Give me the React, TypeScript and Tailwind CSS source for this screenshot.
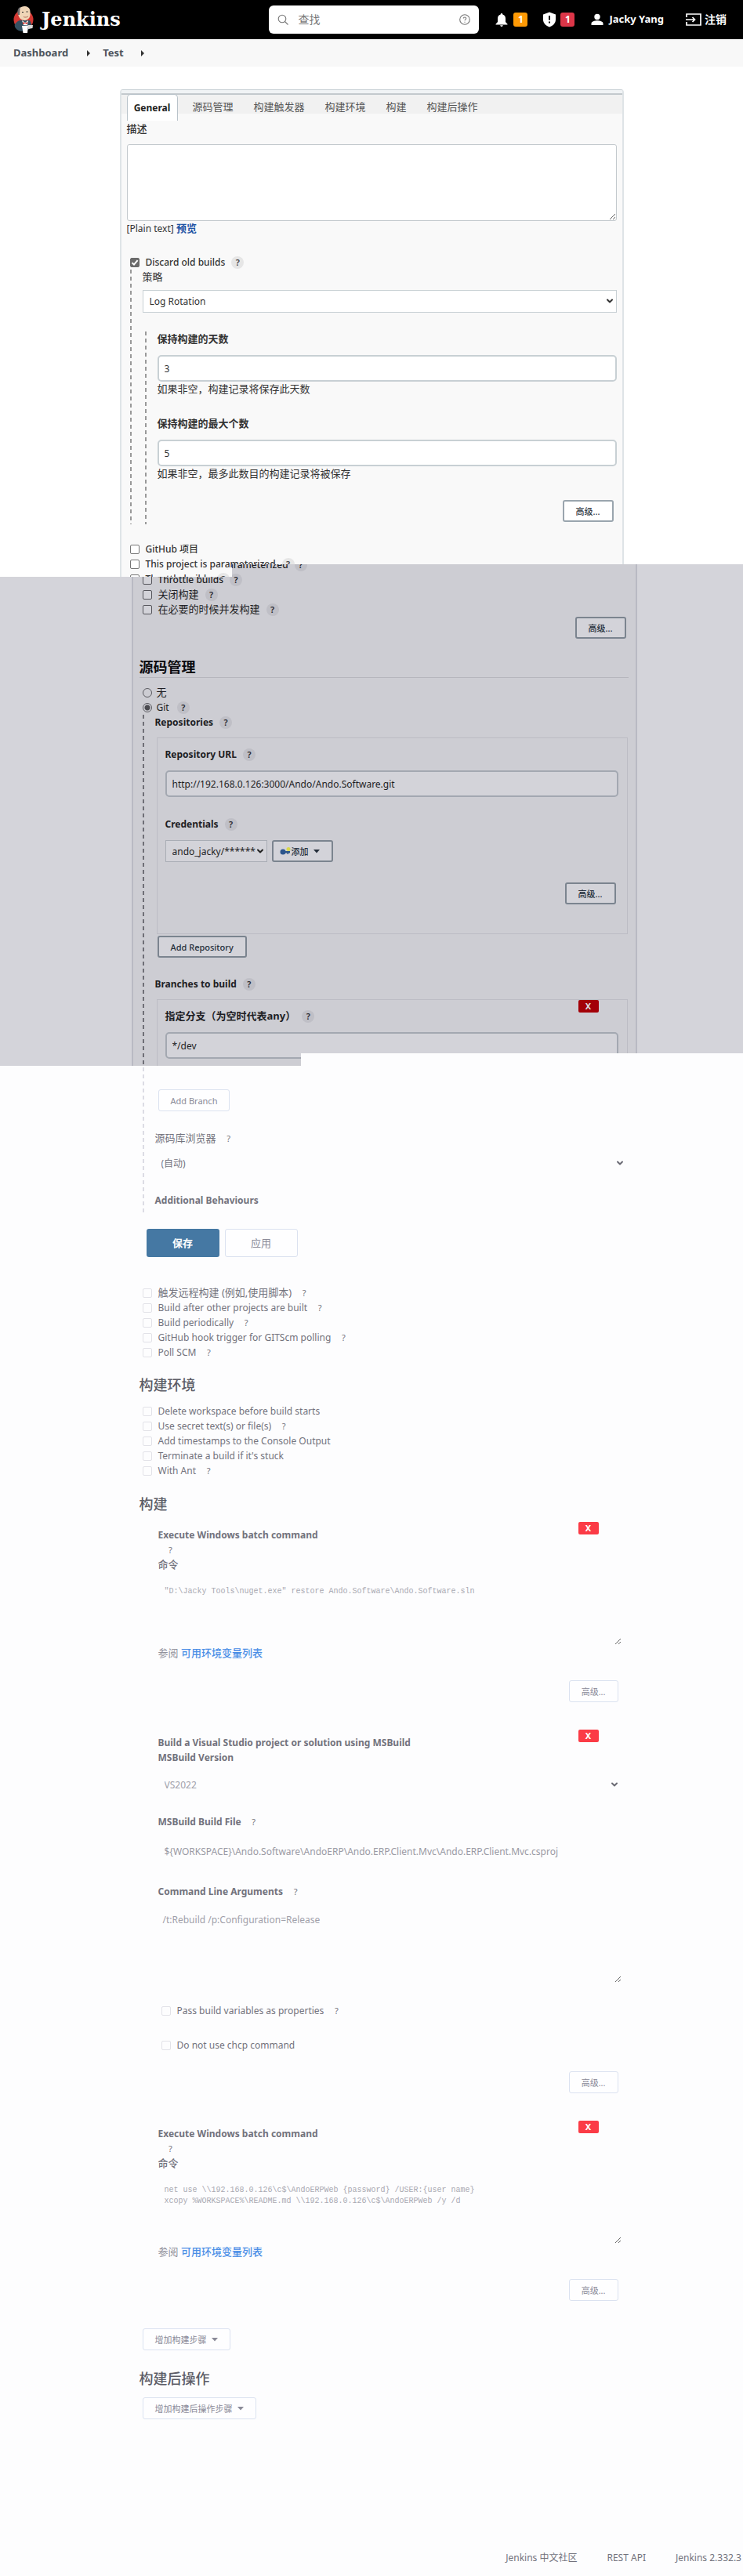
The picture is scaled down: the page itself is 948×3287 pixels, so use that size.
import React, { ReactNode, useId } from "react";
import { ChevronDown } from "lucide-react";

type Tone = "light" | "dim" | "plain";

function Help({ tone = "light" }: { tone?: Tone }) {
  const look =
    tone === "light"
      ? "bg-[#e6e6e6] text-[#444] font-semibold"
      : tone === "dim"
        ? "bg-[#bfbfc6] text-[#26262c] font-semibold"
        : "text-[#77777f]";
  return (
    <a href="#help" aria-label="帮助" className={`ml-2 inline-flex size-4 shrink-0 items-center justify-center rounded-full text-[11px] leading-4 ${look}`}>
      ?
    </a>
  );
}

function Check({ label, help, tone = "light", checked = false, strong = false }: { label: string; help?: boolean; tone?: Tone; checked?: boolean; strong?: boolean }) {
  const id = useId();
  const box =
    tone === "light"
      ? "border-[#767676] bg-white"
      : tone === "dim"
        ? "border-[#55555b] bg-[#d3d3d9]"
        : "border-[#e2e2e8] bg-[#fdfdfe]";
  return (
    <div className="flex h-[19px] items-center">
      <span className="relative flex size-3 shrink-0">
        <input id={id} type="checkbox" defaultChecked={checked} className={`peer size-3 appearance-none rounded-[2px] border checked:border-[#6b6b6b] checked:bg-[#6b6b6b] ${box}`} />
        <svg viewBox="0 0 12 12" className="pointer-events-none absolute inset-0 hidden size-3 peer-checked:block" fill="none" stroke="white" strokeWidth="2">
          <path d="M2.5 6.2 5 8.6 9.6 3.2" />
        </svg>
      </span>
      <label htmlFor={id} className={`ml-2 whitespace-nowrap ${strong ? "font-medium" : ""}`}>{label}</label>
      {help && <Help tone={tone} />}
    </div>
  );
}

function Label({ children, help, tone = "light", htmlFor }: { children: ReactNode; help?: boolean; tone?: Tone; htmlFor?: string }) {
  return (
    <div className="flex h-[19px] items-center">
      <label htmlFor={htmlFor} className="font-bold whitespace-nowrap">{children}</label>
      {help && <Help tone={tone} />}
    </div>
  );
}

function Button({ children, tone = "light" }: { children: ReactNode; tone?: Tone }) {
  const c =
    tone === "light"
      ? "border-2 border-[#9aa5ae] bg-white text-[#333c46] font-medium"
      : tone === "dim"
        ? "border-2 border-[#7b848f] bg-[#d3d3d9] text-[#252f3b] font-medium"
        : "border border-[#dbe2f0] bg-[#fefeff] text-[#8a8a98]";
  return <button type="button" className={`inline-flex h-7 items-center justify-center rounded-[3px] px-[15px] text-[11px] whitespace-nowrap ${c}`}>{children}</button>;
}

function Caret() {
  return (
    <svg viewBox="0 0 8 5" className="ml-1.5 h-[5px] w-2" fill="currentColor">
      <path d="M0 0h8L4 4.5z" />
    </svg>
  );
}

function Select({ id, value, className, arrow }: { id: string; value: string; className: string; arrow: string }) {
  return (
    <div className="relative">
      <select id={id} className={`block w-full appearance-none px-2 ${className}`}>
        <option>{value}</option>
      </select>
      <ChevronDown className={`pointer-events-none absolute top-2 size-3 ${arrow}`} strokeWidth={4} />
    </div>
  );
}

function Delete({ tone = "plain" }: { tone?: Tone }) {
  return (
    <button type="button" aria-label="删除" className={`absolute top-0 h-4 w-[26px] rounded-[2px] text-[11px] leading-4 font-bold ${tone === "dim" ? "right-9 bg-[#a30008] text-[#dadae0]" : "right-[41px] bg-[#fb3b46] text-white"}`}>
      X
    </button>
  );
}

function Dashes({ tone }: { tone: Tone }) {
  const c =
    tone === "light"
      ? "bg-[repeating-linear-gradient(to_bottom,#999_0_5px,transparent_5px_9px)]"
      : tone === "dim"
        ? "bg-[repeating-linear-gradient(to_bottom,#6f6f77_0_5px,transparent_5px_9px)]"
        : "bg-[repeating-linear-gradient(to_bottom,#dcdce4_0_5px,transparent_5px_9px)]";
  return <span className={`w-0.5 shrink-0 ${c}`} />;
}

function JenkinsLogo() {
  return (
    <svg viewBox="0 0 26 36" className="h-9 w-[26px]">
      <circle cx="13" cy="18" r="12.5" fill="#d33833" />
      <path d="M2 24 C5 19 9 18 13 19 L21 19 C23 22 24 26 22 29 C17 33 9 34 5 31 C3 29 1 27 2 24Z" fill="#335061" />
      <path d="M6 11 C5 4 10 0.5 15 1 C20 1.5 22 5 21.5 10 C22 14 20 18 15 19 C10 19 7 16 6 11Z" fill="#f0d6b7" />
      <path d="M6 12 C4.500 7 6 3 9 2 C8 5 8.500 8 8 12Z" fill="#6d6b6d" />
      <path d="M11 8.500h2M16.500 8h2" stroke="#222" strokeWidth="1" />
      <path d="M13 14.500 C15 15.500 17 15 19 14" stroke="#b0705a" strokeWidth="1" fill="none" />
      <path d="M11 19 L15 22 L19 19 L18 25 L13 25Z" fill="#fff" />
      <path d="M12 21 L15 22.500 L18 21 L18 24 L15 23 L12 24Z" fill="#d33833" />
      <path d="M11 26 L19 25.500 L18 35 L12.500 35Z" fill="#fff" />
      <path d="M19 25 L25 25 L24.500 29 L19 30Z" fill="#dcd9d8" />
    </svg>
  );
}

function Header() {
  return (
    <header className="flex h-[50px] items-center bg-black pl-[17px] text-white">
      <a href="#home" className="flex items-center gap-2.5">
        <JenkinsLogo />
        <span className="font-['DejaVu_Serif',serif] text-2xl leading-8 font-bold">Jenkins</span>
      </a>
      <div className="ml-auto flex h-9 w-[268px] items-center rounded-md bg-white px-[11px]">
        <svg viewBox="0 0 14 14" className="size-3.5" fill="none" stroke="#777" strokeWidth="1.1">
          <circle cx="6" cy="6" r="4.800" />
          <path d="m9.500 9.500 4 4" />
        </svg>
        <input type="search" aria-label="查找" placeholder="查找" className="ml-3 min-w-0 flex-1 bg-transparent text-sm outline-none placeholder:text-[#777]" />
        <svg viewBox="0 0 14 14" className="size-3.5" fill="none" stroke="#777" strokeWidth="1.1">
          <circle cx="7" cy="7" r="6.300" />
          <path d="M5.300 5.600c0-2.200 3.400-2.200 3.400 0 0 1.200-1.700 1.300-1.700 2.700M7 9.700v1" />
        </svg>
      </div>
      <nav className="flex items-center px-[21px] text-[13px] font-bold">
        <a href="#notifications" aria-label="通知" className="flex items-center gap-[7px]">
          <svg viewBox="0 0 16 18" className="h-[18px] w-4" fill="white">
            <path d="M8 1a1.300 1.300 0 0 1 1.300 1.400C11.800 3 13 5 13 7.500v4.500l2.500 2.700v.8H.5v-.8L3 12V7.500C3 5 4.200 3 6.700 2.400A1.300 1.300 0 0 1 8 1ZM6.200 16.300h3.600c-.2 2.100-3.400 2.100-3.600 0Z" />
          </svg>
          <span className="flex h-[18px] w-[18px] items-center justify-center rounded-[3px] bg-[#fe9a05] text-xs">1</span>
        </a>
        <a href="#security" aria-label="安全" className="ml-5 flex items-center gap-1.5">
          <svg viewBox="0 0 16 20" className="h-5 w-4">
            <path d="M8 .5 16 3.500V10c0 4.500-3.500 8-8 9.500C3.500 18 0 14.500 0 10V3.500Z" fill="white" />
            <path d="M8 5v5.500M8 12.500v2" stroke="black" strokeWidth="2" />
          </svg>
          <span className="flex h-[18px] w-[18px] items-center justify-center rounded-[3px] bg-[#dc3648] text-xs">1</span>
        </a>
        <a href="#user" className="ml-[21px] flex items-center gap-[7px]">
          <svg viewBox="0 0 16 16" className="size-4" fill="white">
            <circle cx="8" cy="4.500" r="3.700" />
            <path d="M.5 15v-2c0-2.500 4-3.700 7.500-3.700s7.500 1.200 7.500 3.700v2Z" />
          </svg>
          <span className="whitespace-nowrap">Jacky Yang</span>
        </a>
        <a href="#logout" className="ml-7 flex items-center gap-1">
          <svg viewBox="0 0 20 16" className="h-4 w-5" fill="none" stroke="white" strokeWidth="1.700">
            <path d="M1 5V1h18v14H1v-4M0 8h11M8.500 5l3 3-3 3" />
          </svg>
          <span className="text-sm whitespace-nowrap">注销</span>
        </a>
      </nav>
    </header>
  );
}

const tabs = ["源码管理", "构建触发器", "构建环境", "构建", "构建后操作"];

const inputLight = "block h-[34px] w-full rounded-[5px] border-2 border-[#c8d0d4] bg-white px-[7px] text-xs text-[#333]";
const inputDim = "block h-[34px] w-full rounded-[5px] border-2 border-[#a3a8b1] bg-[#d3d3d9] px-[7px] text-xs text-[#1e1e24]";

function GeneralSection() {
  return (
    <section className="bg-white pt-[29px]">
      <div className="mx-auto h-[622px] w-full max-w-[643px] overflow-hidden rounded-t-sm border-x-2 border-t border-[#dfe4e7] border-t-[#c6ced3] bg-[#f9f9f9] text-xs leading-[19px] text-[#333]">
        <div className="h-1 bg-[#f0f3f5]" />
        <nav className="flex h-[26px] border-t-2 border-[#c3c9cd] bg-[#f1f1f1] pl-[7px] text-[13px]">
          <a href="#general" className="-mt-px flex h-[34px] w-[65px] items-center justify-center rounded-t-[5px] border border-b-0 border-[#b9c3ca] bg-white text-xs font-bold text-[#222]">General</a>
          <div className="flex gap-[26px] pt-1.5 pl-[19px] whitespace-nowrap text-[#555]">
            {tabs.map((t) => (
              <a key={t} href={`#${t}`}>{t}</a>
            ))}
          </div>
        </nav>
        <div className="px-[7px] pt-2.5">
          <label htmlFor="description" className="block text-[13px] font-medium">描述</label>
          <textarea id="description" className="mt-2.5 block h-[98px] w-full resize rounded-[3px] border border-[#c3c9cd] bg-white" />
          <p className="text-[13px]">
            <span className="text-xs">[Plain text]</span> <a href="#preview" className="font-bold text-[#1f55a5]">预览</a>
          </p>
          <div className="mt-6 pl-1">
            <Check label="Discard old builds" help checked strong />
            <div className="flex h-[325px]">
              <Dashes tone="light" />
              <div className="ml-3.5 flex-1">
                <label htmlFor="strategy" className="block text-[13px]">策略</label>
                <div className="mt-[7px]">
                  <Select id="strategy" value="Log Rotation" className="h-[29px] border border-[#c8d0d4] bg-white" arrow="right-[3px] text-[#333]" />
                </div>
                <div className="mt-6 flex h-[246px] pl-[3px]">
                  <Dashes tone="light" />
                  <div className="ml-3.5 flex-1 text-[13px]">
                    <Label htmlFor="days">保持构建的天数</Label>
                    <div className="mt-[11px]"><input id="days" defaultValue="3" className={inputLight} /></div>
                    <p>如果非空，构建记录将保存此天数</p>
                    <div className="mt-[25px]"><Label htmlFor="count">保持构建的最大个数</Label></div>
                    <div className="mt-[11px]"><input id="count" defaultValue="5" className={inputLight} /></div>
                    <p>如果非空，最多此数目的构建记录将被保存</p>
                    <div className="mt-6 flex justify-end pr-1"><Button>高级...</Button></div>
                  </div>
                </div>
              </div>
            </div>
            <div className="mt-[22px]">
              <Check label="GitHub 项目" strong />
              <Check label="This project is parameterized" help strong />
              <Check label="Throttle builds" help strong />
            </div>
          </div>
        </div>
      </div>
    </section>
  );
}

function SourceSection() {
  const radio = "size-3 appearance-none rounded-full border border-[#5a5a60] checked:bg-[radial-gradient(#4b4b50_0_3px,transparent_4px)]";
  return (
    <section className="relative z-10 -mt-4 h-[640px] overflow-hidden bg-[#d4d4da] [clip-path:polygon(296px_0,100%_0,100%_624px,384px_624px,384px_100%,0_100%,0_16px,296px_16px)]">
      <div className="mx-auto flex w-full max-w-[677px] justify-end text-xs leading-[19px] text-[#1e1e24]">
        <div className="h-[640px] w-[645px] border-x-2 border-[#b9bac3] bg-[#cdcdd3] pr-[9px] pl-2">
          <div className="-mt-[9px] pl-1">
            <Check tone="dim" label="This project is parameterized" help strong />
            <Check tone="dim" label="Throttle builds" help strong />
            <div className="text-[13px]">
              <Check tone="dim" label="关闭构建" help />
              <Check tone="dim" label="在必要的时候并发构建" help />
            </div>
          </div>
          <div className="flex justify-end pr-[3px]"><Button tone="dim">高级...</Button></div>
          <h2 className="mt-[23px] border-b border-[#b6b6bd] text-lg leading-[26px] font-bold text-[#0c0c10]">源码管理</h2>
          <div className="pt-[9px] pl-1">
            <label className="flex h-[19px] items-center gap-1.5 text-[13px]">
              <input type="radio" name="scm" className={radio} />无
            </label>
            <div className="flex h-[19px] items-center">
              <label className="mr-0.5 flex items-center gap-1.5">
                <input type="radio" name="scm" defaultChecked className={radio} />Git
              </label>
              <Help tone="dim" />
            </div>
            <div className="flex h-[462px]">
              <Dashes tone="dim" />
              <div className="ml-3.5 flex-1">
                <Label tone="dim" help>Repositories</Label>
                <div className="mt-2.5 mr-px ml-0.5 h-[251px] border border-[#bcbcc4] pt-[11px] pr-[11px] pl-2.5">
                  <Label tone="dim" help htmlFor="url">Repository URL</Label>
                  <div className="mt-[11px]"><input id="url" defaultValue="http://192.168.0.126:3000/Ando/Ando.Software.git" className={inputDim} /></div>
                  <div className="mt-[25px]"><Label tone="dim" help htmlFor="credentials">Credentials</Label></div>
                  <div className="mt-[11px] flex gap-1.5">
                    <div className="w-[130px]"><Select id="credentials" value="ando_jacky/******" className="h-7 border border-[#a9adb5] bg-[#d3d3d9]" arrow="right-[3px] text-[#222]" /></div>
                    <button type="button" className="flex h-7 w-[78px] items-center rounded-[3px] border-2 border-[#7b848f] bg-[#d3d3d9] pl-2 text-[11px] font-medium text-[#252f3b]">
                      <svg viewBox="0 0 14 10" className="mr-px h-2.5 w-3.5">
                        <circle cx="4" cy="6" r="3.500" fill="#2d568c" />
                        <path d="M6 5h7v2.500h-2v1.500H9.500V7.500H6Z" fill="#2d568c" />
                        <circle cx="11" cy="2.500" r="2.500" fill="#d8d84c" />
                      </svg>
                      添加
                      <Caret />
                    </button>
                  </div>
                  <div className="mt-[26px] flex justify-end pr-[3px]"><Button tone="dim">高级...</Button></div>
                </div>
                <div className="mt-0.5 ml-[3px]"><Button tone="dim">Add Repository</Button></div>
                <div className="mt-6"><Label tone="dim" help>Branches to build</Label></div>
                <div className="relative mt-2.5 mr-px ml-0.5 h-[100px] border border-[#bcbcc4] pt-[11px] pr-[11px] pl-2.5">
                  <Delete tone="dim" />
                  <div className="text-[13px]"><Label tone="dim" help htmlFor="branch">指定分支（为空时代表any）</Label></div>
                  <div className="mt-[11px]"><input id="branch" defaultValue="*/dev" className={inputDim} /></div>
                </div>
              </div>
            </div>
          </div>
        </div>
      </div>
    </section>
  );
}

function BatchStep({ id, script }: { id: string; script: string }) {
  return (
    <div className="relative pt-[7px] pr-3 pl-5">
      <Delete />
      <div className="h-[19px] font-bold">Execute Windows batch command</div>
      <div className="flex h-[19px] items-center"><Help tone="plain" /></div>
      <label htmlFor={id} className="block text-[13px] font-medium">命令</label>
      <textarea id={id} defaultValue={script} className="mt-[11px] block h-[82px] w-full resize bg-transparent px-2 py-[7px] font-['Liberation_Mono',monospace] text-[10px] leading-[14px] text-[#a9a9b2]" />
      <p className="mt-px text-[13px] text-[#90909a]">
        参阅 <a href="#variables" className="font-medium text-[#4a8ee6]">可用环境变量列表</a>
      </p>
      <div className="mt-[25px] flex justify-end pr-1"><Button tone="plain">高级...</Button></div>
    </div>
  );
}

function BuildSections() {
  return (
    <section className="-mt-4 bg-[#fdfdfe]">
      <div className="mx-auto w-full max-w-[677px] pr-2 pl-[42px] text-xs leading-[19px] text-[#73737d]">
        <div className="flex h-[206px] pl-1">
          <Dashes tone="plain" />
          <div className="ml-3.5 flex-1 pt-[46px]">
            <div className="ml-1"><Button tone="plain">Add Branch</Button></div>
            <div className="mt-[25px] flex h-[19px] items-center text-[13px]">
              <label htmlFor="browser">源码库浏览器</label>
              <Help tone="plain" />
            </div>
            <div className="mt-2 pr-1.5"><Select id="browser" value="(自动)" className="h-7 bg-transparent" arrow="right-0.5 text-[#6a6a74]" /></div>
            <div className="mt-6 font-bold">Additional Behaviours</div>
          </div>
        </div>
        <div className="flex h-[90px] items-start gap-[7px] pt-[18px] pl-[9px]">
          <button type="button" className="h-9 w-[93px] rounded-[3px] bg-[#4578a3] text-[13px] font-bold text-white">保存</button>
          <button type="button" className="h-9 w-[93px] rounded-[3px] border border-[#dbe2f0] bg-[#fefeff] text-[13px] text-[#8a8a98]">应用</button>
        </div>
        <div className="pl-1">
          <div className="text-[13px]"><Check tone="plain" label="触发远程构建 (例如,使用脚本)" help /></div>
          <Check tone="plain" label="Build after other projects are built" help />
          <Check tone="plain" label="Build periodically" help />
          <Check tone="plain" label="GitHub hook trigger for GITScm polling" help />
          <Check tone="plain" label="Poll SCM" help />
        </div>
        <h2 className="mt-[19px] text-lg leading-[26px] font-medium text-[#5c5c66]">构建环境</h2>
        <div className="mt-[11px] pl-1">
          <Check tone="plain" label="Delete workspace before build starts" />
          <Check tone="plain" label="Use secret text(s) or file(s)" help />
          <Check tone="plain" label="Add timestamps to the Console Output" />
          <Check tone="plain" label="Terminate a build if it's stuck" />
          <Check tone="plain" label="With Ant" help />
        </div>
        <h2 className="mt-5 text-lg leading-[26px] font-medium text-[#5c5c66]">构建</h2>
        <div className="mt-2.5 pl-1">
          <BatchStep id="batch-1" script={'"D:\\Jacky Tools\\nuget.exe" restore Ando.Software\\Ando.Software.sln'} />
          <div className="relative mt-[35px] pt-[7px] pr-3 pl-5">
            <Delete />
            <div className="h-[19px] font-bold">Build a Visual Studio project or solution using MSBuild</div>
            <Label htmlFor="msbuild">MSBuild Version</Label>
            <div className="mt-[11px]"><Select id="msbuild" value="VS2022" className="h-7 bg-transparent text-[#a0a0aa]" arrow="right-[3px] text-[#6a6a74]" /></div>
            <div className="mt-6"><Label tone="plain" help htmlFor="build-file">MSBuild Build File</Label></div>
            <input id="build-file" defaultValue="${WORKSPACE}\Ando.Software\AndoERP\Ando.ERP.Client.Mvc\Ando.ERP.Client.Mvc.csproj" className="mt-[11px] block h-[34px] w-full bg-transparent px-2 text-[#9a9aa4]" />
            <div className="mt-[25px]"><Label tone="plain" help htmlFor="arguments">Command Line Arguments</Label></div>
            <textarea id="arguments" defaultValue="/t:Rebuild /p:Configuration=Release" className="mt-2.5 block h-[97px] w-full resize bg-transparent px-1.5 py-[7px] text-[#a0a0aa]" />
            <div className="mt-[26px] pl-1"><Check tone="plain" label="Pass build variables as properties" help /></div>
            <div className="mt-[25px] pl-1"><Check tone="plain" label="Do not use chcp command" /></div>
            <div className="mt-6 flex justify-end pr-1"><Button tone="plain">高级...</Button></div>
          </div>
          <div className="mt-[35px]">
            <BatchStep
              id="batch-2"
              script={"net use \\\\192.168.0.126\\c$\\AndoERPWeb {password} /USER:{user name}\nxcopy %WORKSPACE%\\README.md \\\\192.168.0.126\\c$\\AndoERPWeb /y /d"}
            />
          </div>
          <div className="mt-[35px]"><Button tone="plain">增加构建步骤<Caret /></Button></div>
        </div>
        <h2 className="mt-[23px] text-lg leading-[26px] font-medium text-[#5c5c66]">构建后操作</h2>
        <div className="mt-[11px] pl-1"><Button tone="plain">增加构建后操作步骤<Caret /></Button></div>
      </div>
      <footer className="flex justify-end gap-[38px] pt-[167px] pr-0.5 pb-6 text-xs leading-[19px] text-[#73737d]">
        <a href="#community">Jenkins 中文社区</a>
        <a href="#api">REST API</a>
        <a href="#version">Jenkins 2.332.3</a>
      </footer>
    </section>
  );
}

export default function App() {
  return (
    <div className="font-['Noto_Sans','Noto_Sans_CJK_SC',sans-serif]">
      <Header />
      <nav aria-label="导航" className="flex h-[35px] items-center bg-[#f8f8f8] pl-[17px] text-[13px] font-bold text-[#4d545d]">
        <a href="#dashboard">Dashboard</a>
        <svg viewBox="0 0 4 8" className="mr-4 ml-6 h-2 w-1" fill="#333"><path d="M0 0v8l4-4z" /></svg>
        <a href="#test">Test</a>
        <svg viewBox="0 0 4 8" className="ml-[22px] h-2 w-1" fill="#333"><path d="M0 0v8l4-4z" /></svg>
      </nav>
      <main>
        <GeneralSection />
        <SourceSection />
        <BuildSections />
      </main>
    </div>
  );
}
